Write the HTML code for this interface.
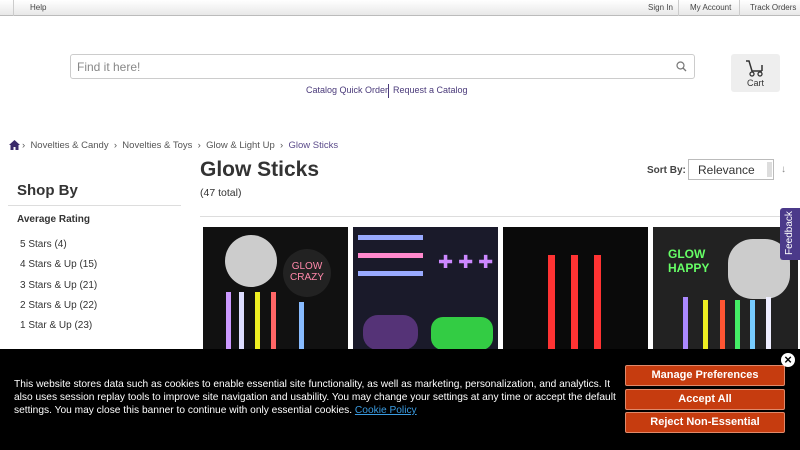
<!DOCTYPE html>
<html><head><style>
*{margin:0;padding:0;box-sizing:border-box}
body{width:800px;height:450px;overflow:hidden;position:relative;background:#fff;font-family:"Liberation Sans",sans-serif;color:#333}
.top{position:absolute;left:0;top:0;width:800px;height:16px;background:linear-gradient(#fff,#e8e8e8);border-bottom:1px solid #bbb;font-size:8px;color:#444;white-space:nowrap}
.top span{position:absolute;top:3px}
.sep{position:absolute;top:0;width:1px;height:16px;background:#ccc}
.search{position:absolute;left:70px;top:54px;width:625px;height:25px;border:1px solid #ccc;border-radius:3px;font-size:12px;color:#888;padding:5px 6px}
.cart{position:absolute;left:731px;top:54px;width:49px;height:38px;background:#eee;border-radius:3px;font-size:9px;text-align:center;padding-top:24px;color:#333}
.links{position:absolute;top:85px;font-size:9px;color:#4a3a7a;white-space:nowrap}
.abs{position:absolute}
.card{position:absolute;top:227px;width:145px;height:123px;background:#111}
.banner{position:absolute;left:0;top:349px;width:800px;height:101px;background:#000}
.btxt{position:absolute;left:14px;top:29px;width:610px;font-size:10.2px;line-height:13px;color:#fff}
.btn{position:absolute;left:625px;width:160px;height:21px;background:#c63c0f;border:1px solid #e0896a;border-radius:2px;color:#fff;font-weight:bold;font-size:11px;text-align:center;line-height:19px}
</style></head><body>
<div class="top"><div class="sep" style="left:13px"></div><span style="left:30px">Help</span>
<span style="left:648px">Sign In</span><div class="sep" style="left:678px"></div><span style="left:690px">My Account</span><div class="sep" style="left:739px"></div><span style="left:750px">Track Orders</span></div>
<div class="search">Find it here!<svg class="abs" style="right:7px;top:6px" width="11" height="11" viewBox="0 0 11 11"><circle cx="4.5" cy="4.5" r="3.5" fill="none" stroke="#777" stroke-width="1.2"/><path d="M7 7l3 3" stroke="#777" stroke-width="1.3"/></svg></div>
<div class="cart"><svg class="abs" style="left:14px;top:6px" width="20" height="17" viewBox="0 0 20 17"><path d="M1 1h3l3 10h10M17 5v6" fill="none" stroke="#333" stroke-width="1.5"/><circle cx="7" cy="14" r="2" fill="none" stroke="#333" stroke-width="1.3"/><circle cx="15" cy="14" r="2" fill="none" stroke="#333" stroke-width="1.3"/></svg>Cart</div>
<div class="links" style="left:306px">Catalog Quick Order</div><div class="abs" style="left:388px;top:84px;width:1px;height:14px;background:#4a3a7a"></div><div class="links" style="left:393px">Request a Catalog</div>
<svg class="abs" style="left:9px;top:140px" width="11" height="10" viewBox="0 0 11 10"><path d="M0 5L5.5 0 11 5H9.5V10H6.5V7H4.5V10H1.5V5z" fill="#3a2a6a"/></svg>
<div class="abs" style="left:22px;top:140px;font-size:9.5px;color:#555;white-space:nowrap">›&nbsp; Novelties &amp; Candy &nbsp;›&nbsp; Novelties &amp; Toys &nbsp;›&nbsp; Glow &amp; Light Up &nbsp;›&nbsp; <span style="color:#5a4a8a">Glow Sticks</span></div>
<div class="abs" style="left:200px;top:158px;font-size:21px;font-weight:bold;color:#333">Glow Sticks</div>
<div class="abs" style="left:200px;top:187px;font-size:10.5px">(47 total)</div>
<div class="abs" style="left:17px;top:182px;font-size:15px;font-weight:bold;color:#333">Shop By</div>
<div class="abs" style="left:8px;top:205px;width:173px;height:1px;background:#ddd"></div>
<div class="abs" style="left:17px;top:214px;font-size:10px;font-weight:bold">Average Rating</div>
<div class="abs" style="left:20px;top:235px;font-size:10px;line-height:20.3px">5 Stars (4)<br>4 Stars &amp; Up (15)<br>3 Stars &amp; Up (21)<br>2 Stars &amp; Up (22)<br>1 Star &amp; Up (23)</div>
<div class="abs" style="left:647px;top:165px;font-size:10px;font-weight:bold;color:#444">Sort By:</div>
<div class="abs" style="left:688px;top:159px;width:86px;height:21px;border:1px solid #bbb;font-size:12px;padding:3px 9px">Relevance<div class="abs" style="right:1px;top:2px;width:5px;height:15px;background:#ddd"></div></div>
<div class="abs" style="left:781px;top:164px;font-size:10px;color:#888">↓</div>
<div class="abs" style="left:200px;top:216px;width:600px;height:1px;background:#ddd"></div>
<div class="card" style="left:203px"><div class="abs" style="left:22px;top:8px;width:52px;height:52px;border-radius:50%;background:#ccc"></div><div class="abs" style="left:80px;top:22px;width:48px;height:48px;border-radius:50%;background:#222;color:#f8a;font-size:10px;text-align:center;padding-top:12px">GLOW CRAZY</div>
<div class="abs" style="left:23px;top:65px;width:5px;height:58px;background:#c9f"></div><div class="abs" style="left:36px;top:65px;width:5px;height:58px;background:#ddf"></div><div class="abs" style="left:52px;top:65px;width:5px;height:58px;background:#ee2"></div><div class="abs" style="left:68px;top:65px;width:5px;height:58px;background:#f66"></div><div class="abs" style="left:96px;top:75px;width:5px;height:48px;background:#8bf"></div></div>
<div class="card" style="left:353px;background:#1a1a2a"><div class="abs" style="left:5px;top:8px;width:65px;height:5px;background:#9af"></div><div class="abs" style="left:5px;top:26px;width:65px;height:5px;background:#f8c"></div><div class="abs" style="left:5px;top:44px;width:65px;height:5px;background:#9af"></div><div class="abs" style="left:10px;top:88px;width:55px;height:35px;background:#537;border-radius:15px"></div><div class="abs" style="left:78px;top:90px;width:62px;height:33px;background:#3c4;border-radius:12px"></div><div class="abs" style="left:85px;top:25px;color:#c8f;font-size:18px">✚ ✚ ✚</div></div>
<div class="card" style="left:503px;background:#0a0a0a"><div class="abs" style="left:45px;top:28px;width:7px;height:95px;background:#f33"></div><div class="abs" style="left:68px;top:28px;width:7px;height:95px;background:#f33"></div><div class="abs" style="left:91px;top:28px;width:7px;height:95px;background:#f33"></div></div>
<div class="card" style="left:653px;background:#222"><div class="abs" style="left:75px;top:12px;width:62px;height:60px;border-radius:40%;background:#ccc"></div><div class="abs" style="left:15px;top:20px;color:#6f6;font-size:12px;font-weight:bold">GLOW<br>HAPPY</div>
<div class="abs" style="left:30px;top:70px;width:5px;height:53px;background:#a8f"></div><div class="abs" style="left:50px;top:73px;width:5px;height:50px;background:#ee2"></div><div class="abs" style="left:67px;top:73px;width:5px;height:50px;background:#f53"></div><div class="abs" style="left:82px;top:73px;width:5px;height:50px;background:#4e6"></div><div class="abs" style="left:97px;top:73px;width:5px;height:50px;background:#7cf"></div><div class="abs" style="left:113px;top:70px;width:5px;height:53px;background:#eef"></div></div>
<div class="abs" style="left:780px;top:208px;width:20px;height:52px;background:#4b3a8a;border-radius:3px 0 0 3px"><div class="abs" style="left:4px;top:47px;transform:rotate(-90deg);transform-origin:0 0;color:#fff;font-size:10px;white-space:nowrap">Feedback</div></div>
<div class="banner"><div class="btxt">This website stores data such as cookies to enable essential site functionality, as well as marketing, personalization, and analytics. It also uses session replay tools to improve site navigation and usability. You may change your settings at any time or accept the default settings. You may close this banner to continue with only essential cookies. <span style="color:#3a9be0;text-decoration:underline">Cookie Policy</span></div>
<div class="btn" style="top:16px">Manage Preferences</div><div class="btn" style="top:40px">Accept All</div><div class="btn" style="top:63px">Reject Non-Essential</div>
<div class="abs" style="left:781px;top:4px;width:14px;height:14px;border-radius:50%;background:#fff;color:#000;font-size:13px;line-height:13px;text-align:center;font-weight:bold">×</div></div>
</body></html>
